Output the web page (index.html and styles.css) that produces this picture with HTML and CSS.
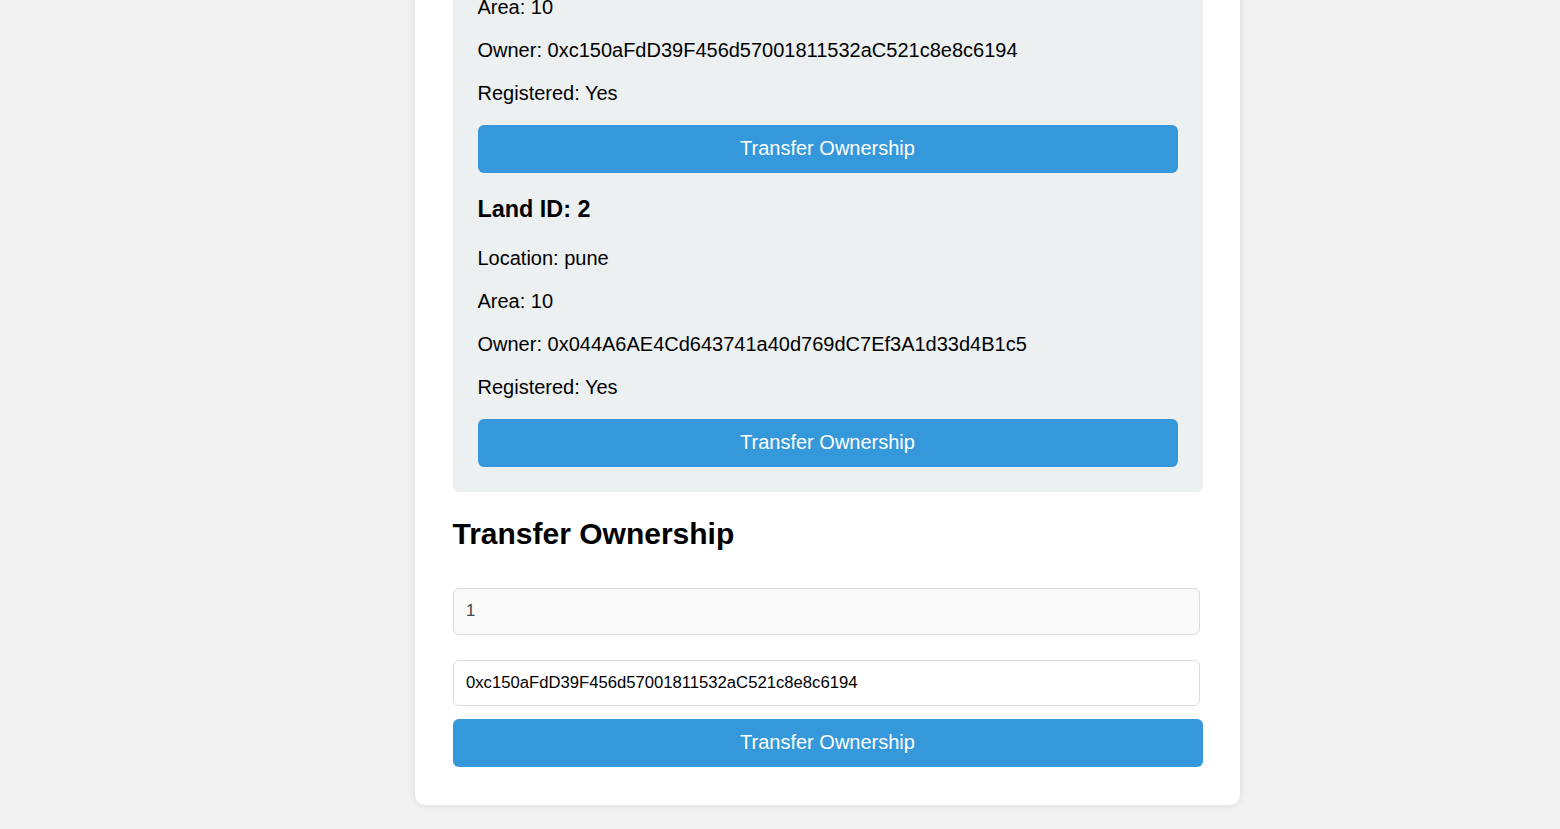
FILE: index.html
```html
<!DOCTYPE html>
<html lang="en">
<head>
<meta charset="utf-8">
<title>Land Registry</title>
<link rel="stylesheet" href="styles.css">
</head>
<body>
<div class="page">
  <div class="card">
    <div class="land-list">
      <div class="land-item">
        <h3>Land ID: 1</h3>
        <p>Location: pune</p>
        <p>Area: 10</p>
        <p>Owner: 0xc150aFdD39F456d57001811532aC521c8e8c6194</p>
        <p>Registered: Yes</p>
        <button class="btn">Transfer Ownership</button>
      </div>
      <div class="land-item">
        <h3>Land ID: 2</h3>
        <p>Location: pune</p>
        <p>Area: 10</p>
        <p>Owner: 0x044A6AE4Cd643741a40d769dC7Ef3A1d33d4B1c5</p>
        <p>Registered: Yes</p>
        <button class="btn">Transfer Ownership</button>
      </div>
    </div>
    <h2>Transfer Ownership</h2>
    <form class="transfer-form">
      <input class="field field-readonly" type="text" value="1" readonly>
      <input class="field" type="text" value="0xc150aFdD39F456d57001811532aC521c8e8c6194">
      <button class="btn btn-submit" type="button">Transfer Ownership</button>
    </form>
  </div>
</div>
</body>
</html>
```

FILE: styles.css
```css
html, body {
  margin: 0;
  padding: 0;
}

body {
  background: #f2f2f2;
  font-family: "Liberation Sans", Arial, sans-serif;
  color: #000;
  font-size: 20px;
  overflow: hidden;
}

.page {
  display: flex;
  padding: 0 320px 40px 415px;
}

.card {
  width: 750px;
  background: #fff;
  padding: 37.5px 37.5px 38.5px;
  border-radius: 10px;
  box-shadow: 0 0 8px rgba(0, 0, 0, 0.1);
  margin-top: -183px;
}

.land-list {
  background: #ecf0f1;
  border-radius: 6px;
  padding: 25px;
}

.land-item h3 {
  font-size: 23.4px;
  font-weight: bold;
  margin: 22.5px 0 24.3px;
  line-height: 27px;
}

.land-item p {
  margin: 20px 0;
  line-height: 23px;
}

.btn {
  display: block;
  width: 100%;
  height: 48px;
  border: none;
  border-radius: 6px;
  background: #3498db;
  color: #fff;
  font-family: "Liberation Sans", Arial, sans-serif;
  font-size: 20px;
  line-height: 45px;
  padding: 0 0 1px;
  cursor: pointer;
}

h2 {
  font-size: 30px;
  font-weight: bold;
  margin: 25px 0 24px;
  line-height: 34.5px;
}

.transfer-form {
  display: flex;
  flex-direction: column;
  align-items: flex-start;
}

.field {
  box-sizing: border-box;
  width: 747px;
  height: 46.5px;
  margin: 12.5px 0;
  padding: 0 12.5px;
  border: 1px solid #dcdcdc;
  border-radius: 6px;
  background: #fff;
  font-family: "Liberation Sans", Arial, sans-serif;
  font-size: 16.67px;
  color: #000;
  outline: none;
}

.field-readonly {
  background: #f9f9f9;
  color: #444;
}

.btn-submit {
  margin: 0;
}
```
